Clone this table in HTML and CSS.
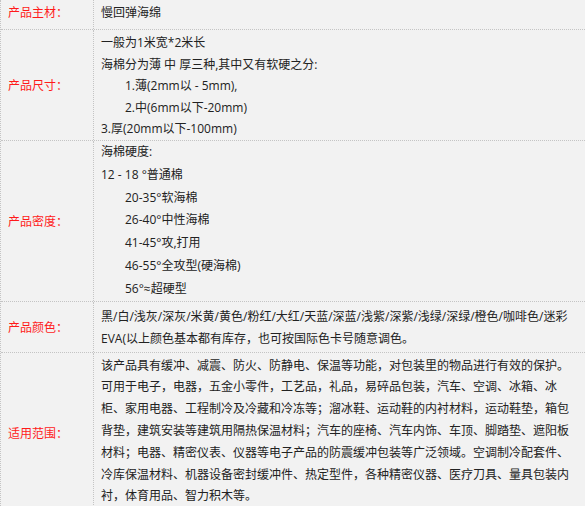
FILE: index.html
```html
<!DOCTYPE html>
<html lang="zh-CN">
<head>
  <meta charset="UTF-8" />
  <title>产品参数</title>
  <link rel="stylesheet" href="styles.css">
</head>
<body>
  <div class="params">
    <div class="row row-main">
      <div class="label">产品主材：</div>
      <div class="value">慢回弹海绵</div>
    </div>
    <div class="row row-size">
      <div class="label">产品尺寸：</div>
      <div class="value">
        <div>一般为1米宽*2米长</div>
        <div>海棉分为薄 中 厚三种,其中又有软硬之分:</div>
        <div class="indent">1.薄(2mm以 - 5mm),</div>
        <div class="indent">2.中(6mm以下-20mm)</div>
        <div>3.厚(20mm以下-100mm)</div>
      </div>
    </div>
    <div class="row row-density">
      <div class="label">产品密度：</div>
      <div class="value">
        <div>海棉硬度:</div>
        <div>12 - 18 °普通棉</div>
        <div class="indent">20-35°软海棉</div>
        <div class="indent">26-40°中性海棉</div>
        <div class="indent">41-45°攻,打用</div>
        <div class="indent">46-55°全攻型(硬海棉)</div>
        <div class="indent">56°≈超硬型</div>
      </div>
    </div>
    <div class="row row-color">
      <div class="label">产品颜色：</div>
      <div class="value">
        <div>黑/白/浅灰/深灰/米黄/黄色/粉红/大红/天蓝/深蓝/浅紫/深紫/浅绿/深绿/橙色/咖啡色/迷彩</div>
        <div>EVA(以上颜色基本都有库存，也可按国际色卡号随意调色。</div>
      </div>
    </div>
    <div class="row row-use">
      <div class="label">适用范围：</div>
      <div class="value">
        <div>该产品具有缓冲、减震、防火、防静电、保温等功能，对包装里的物品进行有效的保护。</div>
        <div>可用于电子，电器，五金小零件，工艺品，礼品，易碎品包装，汽车、空调、冰箱、冰</div>
        <div>柜、家用电器、工程制冷及冷藏和冷冻等；溜冰鞋、运动鞋的内衬材料，运动鞋垫，箱包</div>
        <div>背垫，建筑安装等建筑用隔热保温材料；汽车的座椅、汽车内饰、车顶、脚踏垫、遮阳板</div>
        <div>材料；电器、精密仪表、仪器等电子产品的防震缓冲包装等广泛领域。空调制冷配套件、</div>
        <div>冷库保温材料、机器设备密封缓冲件、热定型件，各种精密仪器、医疗刀具、量具包装内</div>
        <div>衬，体育用品、智力积木等。</div>
      </div>
    </div>
  </div>
</body>
</html>
```

FILE: styles.css
```css
* { box-sizing: border-box; }
html, body {
  margin: 0;
  padding: 0;
  background: #f2f2f2;
  font-family: "Open Sans", "Noto Sans CJK SC", sans-serif;
  font-size: 12px;
  color: #222;
}
.params {
  width: 585px;
  border-left: 1px dotted #c4c4c4;
}
.row {
  display: flex;
  border-bottom: 1px dotted #c4c4c4;
}
.label {
  flex: 0 0 93px;
  border-right: 1px dotted #c4c4c4;
  padding: 3px 0 0 7px;
  color: #ff1a1a;
  line-height: 22px;
  display: flex;
  align-items: center;
  white-space: nowrap;
}
.value {
  flex: 1;
  padding: 2px 4px 0 7px;
  line-height: 22px;
  white-space: nowrap;
}
.indent { padding-left: 24px; }

.row-main { height: 30px; }
.row-main .label { padding-top: 0; padding-bottom: 3px; }
.row-size .value { line-height: 21.6px; padding-top: 2px; }
.row-density .value { line-height: 22.8px; padding-top: 0; }
.row-color .value { padding-top: 4px; padding-bottom: 2px; }
.row-use .value { line-height: 21.8px; padding-top: 2px; padding-bottom: 6px; }
```
